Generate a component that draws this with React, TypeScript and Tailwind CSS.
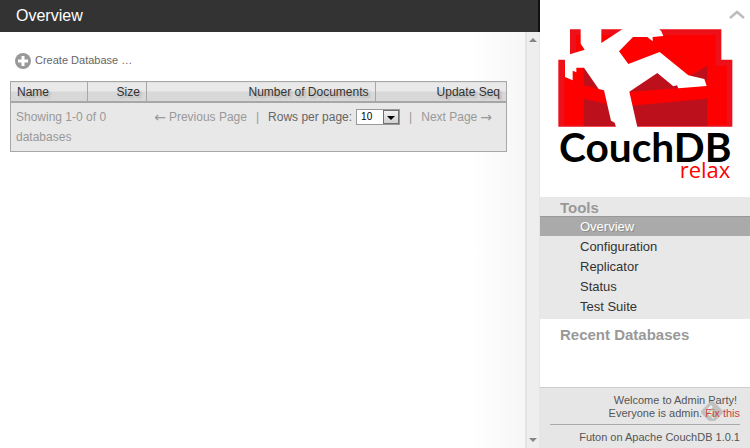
import { useState } from "react";

const columns = [
  { label: "Name", className: "w-[15.6%] text-left" },
  { label: "Size", className: "w-[11.8%] text-right" },
  { label: "Number of Documents", className: "w-[46.1%] text-right" },
  { label: "Update Seq", className: "w-[26.5%] text-right" },
];

const tools = ["Overview", "Configuration", "Replicator", "Status", "Test Suite"];

function Logo() {
  return (
    <svg viewBox="54 87 525 480" className="w-[175px] h-[160px]" role="img" aria-label="CouchDB relax">
      <path d="M90 88H544V179H577V380H55V179H90Z" fill="#ed1019" />
      <path d="M108 105H526V197H560V374H73V197H108Z" fill="#ff0000" />
      <path d="M131 200L200 270V272L131 255Z" fill="#bd101d" />
      <path d="M131 296L230 318V378H131Z" fill="#bd101d" />
      <path d="M266 276L352 217L420 250V264Z" fill="#bd101d" />
      <path d="M440 233L502 197V240Z" fill="#bd101d" />
      <path d="M270 317L502 296V378H270Z" fill="#bd101d" />
      <path
        d="M122 86H184V129L247 88V86H356L364 94L370 108L338 111V124L322 111H279L237 154L265 192L359 156L445 226L493 237L500 258L415 265L411 256L400 259L352 219L268 275L292 381H228L224 368L213 362L192 271L176 267L132 203H109V217L98 212V241L75 231V163H90L134 149L122 131Z"
        fill="#ffffff"
      />
      <text x="57" y="487" fontSize="122" className="font-[Lato,sans-serif] font-bold" fill="#000000">
        CouchDB
      </text>
      <text x="571" y="534" fontSize="66" textAnchor="end" className="font-['Open_Sans',sans-serif]" fill="#ff0000">
        relax
      </text>
    </svg>
  );
}

function Scrollbar() {
  return (
    <div className="flex w-[15px] flex-col items-center justify-between border-r border-l-2 border-r-[#e6e6e6] border-l-[#e3e3e3] bg-[#eeeeee] py-1.5">
      <svg viewBox="0 0 8 4" className="h-1 w-2">
        <path d="M4 0L8 4H0Z" fill="#858585" />
      </svg>
      <svg viewBox="0 0 8 4" className="h-1 w-2">
        <path d="M0 0H8L4 4Z" fill="#858585" />
      </svg>
    </div>
  );
}

function DatabaseTable() {
  const [rows, setRows] = useState("10");

  return (
    <table className="w-full table-fixed border-collapse border border-[#a7a7a7] text-xs">
      <thead>
        <tr>
          {columns.map((col) => (
            <th
              key={col.label}
              className={`${col.className} h-5 border border-b-2 border-[#a7a7a7] bg-linear-to-b from-[#e9e9e9] from-50% to-[#d8d8d8] to-50% px-1.5 pt-0.5 leading-4 font-normal text-[#333333] text-shadow-[2px_2px_2px_#b0b0b0]`}
            >
              {col.label}
            </th>
          ))}
        </tr>
      </thead>
      <tfoot>
        <tr>
          <td colSpan={4} className="bg-[#e8e8e8] py-1 pr-3.5 pl-[5px] leading-5 text-[#999999]">
            <div className="flex items-start justify-between">
              <span className="w-[100px]">Showing 1-0 of 0 databases</span>
              <div className="flex gap-[9px] whitespace-nowrap">
                <span className="flex gap-[3px]">
                  <span className="font-['DejaVu_Sans',sans-serif] text-sm leading-5">←</span>
                  Previous Page
                </span>
                <span>|</span>
                <label className="flex text-[#666666]">
                  Rows per page:
                  <span className="relative ml-1 mt-0.5 h-4">
                    <select
                      value={rows}
                      onChange={(e) => setRows(e.target.value)}
                      className="block h-4 w-11 appearance-none border border-[#999999] bg-white pl-1 text-[10px] leading-[14px] text-black"
                    >
                      <option>5</option>
                      <option>10</option>
                      <option>25</option>
                      <option>50</option>
                      <option>100</option>
                    </select>
                    <span className="pointer-events-none absolute top-px right-px flex h-[14px] w-4 items-center justify-center border border-[#707070] bg-linear-to-b from-[#f2f2f2] to-[#d0d0d0]">
                      <svg viewBox="0 0 8 4" className="mt-0.5 h-1 w-2">
                        <path d="M0 0H8L4 4Z" fill="#000000" />
                      </svg>
                    </span>
                  </span>
                </label>
                <span>|</span>
                <span className="flex gap-[3px]">
                  Next Page
                  <span className="font-['DejaVu_Sans',sans-serif] text-sm leading-5">→</span>
                </span>
              </div>
            </div>
          </td>
        </tr>
      </tfoot>
    </table>
  );
}

function Sidebar() {
  return (
    <aside className="flex w-[210px] shrink-0 flex-col bg-white">
      <div className="flex h-[197px] items-start pt-[29px] pl-[18px]">
        <Logo />
        <button aria-label="Hide sidebar" className="-mt-[19px] -ml-1">
          <svg viewBox="0 0 16 9" className="h-[9px] w-4" fill="none" stroke="#bdbdbd" strokeWidth="2.5">
            <path d="M1 8L8 2L15 8" />
          </svg>
        </button>
      </div>
      <nav className="bg-[#e8e8e8] pb-[3px]">
        <h2 className="h-[19px] pt-0.5 pl-5 text-[15px] leading-[18px] font-bold text-[#999999]">Tools</h2>
        <ul>
          {tools.map((tool) => (
            <li key={tool}>
              <a
                href="#"
                className={`block h-5 pl-10 text-[13px] leading-5 ${
                  tool === "Overview"
                    ? "border-t border-[#999999] bg-[#aaaaaa] text-white text-shadow-[1px_1px_1px_#888888]"
                    : "pt-px text-[#333333]"
                }`}
              >
                {tool}
              </a>
            </li>
          ))}
        </ul>
      </nav>
      <h2 className="pt-[7px] pl-5 text-[15px] leading-[18px] font-bold text-[#999999]">Recent Databases</h2>
      <footer className="mt-auto border-t border-[#cccccc] bg-[#e6e6e6] px-2.5 pt-1.5 pb-1 text-right text-[11px] leading-[13px] text-[#555555]">
        <p className="pr-[3px]">Welcome to Admin Party!</p>
        <p className="relative">
          <svg viewBox="0 0 24 24" className="absolute right-4 -bottom-1 size-6">
            <path d="M10 2Q12 0 14 2L22 10Q24 12 22 14L16 20Q15 21 13 21H11Q9 21 8 20L2 14Q0 12 2 10Z" fill="#c0c0c0" />
            <path d="M6 12L12 6M9 15L13 11M12 18L13 17" stroke="#eeeeee" strokeWidth="2.5" />
          </svg>
          <span className="relative">
            Everyone is admin.{" "}
            <a href="#" className="text-[#cc4444]">
              Fix this
            </a>
          </span>
        </p>
        <p className="mt-1 border-t border-[#aaaaaa] pt-1.5">Futon on Apache CouchDB 1.0.1</p>
      </footer>
    </aside>
  );
}

export default function App() {
  return (
    <div className="flex min-h-screen bg-white font-['Liberation_Sans',Arial,sans-serif]">
      <div className="flex min-w-0 flex-1 flex-col">
        <h1 className="h-8 border-r-2 border-[#111111] bg-[#333333] pl-4 text-base leading-8 text-white">Overview</h1>
        <div className="flex flex-1">
          <main className="min-w-0 flex-1 bg-linear-to-r from-white from-90% to-[#f6f6f6] pt-5 pr-[18px] pl-2.5">
            <button className="mb-3 ml-[5px] flex h-[17px] items-center gap-1 text-[11px] text-[#666666]">
              <svg viewBox="0 0 16 16" className="size-4">
                <circle cx="8" cy="8" r="8" fill="#999999" />
                <path d="M8 3V13M3 8H13" stroke="#ffffff" strokeWidth="3" />
              </svg>
              Create Database …
            </button>
            <DatabaseTable />
          </main>
          <Scrollbar />
        </div>
      </div>
      <Sidebar />
    </div>
  );
}
